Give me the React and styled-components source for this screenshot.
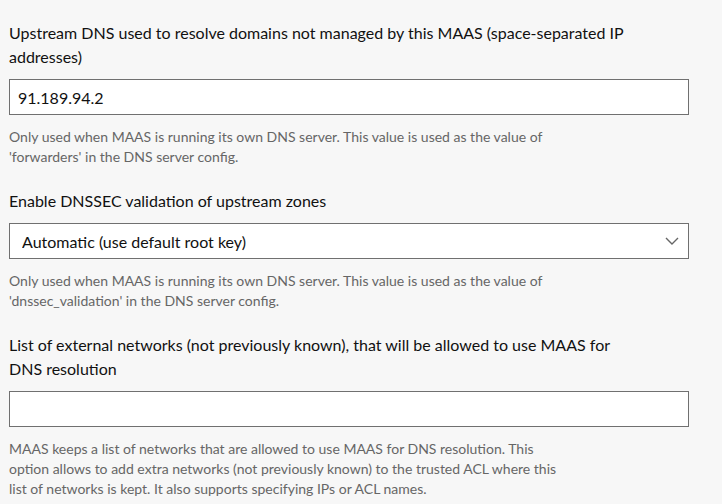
import React from "react";
import styled, { createGlobalStyle } from "styled-components";

const GlobalStyle = createGlobalStyle`
  html, body {
    margin: 0;
    background: #f7f7f7;
  }
  body {
    font-family: Lato, "Liberation Sans", sans-serif;
    color: #111;
  }
`;

const Form = styled.form`
  padding: 21px 0 0 9px;
  width: 680px;
`;

const Field = styled.div`
  display: flex;
  flex-direction: column;
  margin-bottom: 22px;
`;

const Label = styled.label`
  font-size: 16px;
  line-height: 24px;
  max-width: 630px;
  margin-bottom: 10px;
  color: #111;
`;

const TextInput = styled.input`
  box-sizing: border-box;
  width: 100%;
  height: 36px;
  margin: 0;
  padding: 0 8px;
  border: 1px solid #707070;
  border-radius: 0;
  background: #fff;
  font-family: inherit;
  font-size: 16px;
  color: #111;
  outline: none;
`;

const SelectWrap = styled.div`
  position: relative;
  width: 100%;
`;

const Select = styled.select`
  box-sizing: border-box;
  appearance: none;
  width: 100%;
  height: 36px;
  margin: 0;
  padding: 0 40px 0 12px;
  border: 1px solid #707070;
  border-radius: 0;
  background: #fff;
  font-family: inherit;
  font-size: 16px;
  color: #111;
  outline: none;
`;

const Chevron = styled.svg`
  position: absolute;
  right: 10px;
  top: 14px;
  pointer-events: none;
`;

const Help = styled.p`
  margin: 12px 0 0;
  max-width: 560px;
  font-size: 14px;
  line-height: 20px;
  color: #666;
`;

const fields = [
  {
    id: "upstream",
    label:
      "Upstream DNS used to resolve domains not managed by this MAAS (space-separated IP addresses)",
    value: "91.189.94.2",
    help: "Only used when MAAS is running its own DNS server. This value is used as the value of 'forwarders' in the DNS server config.",
  },
  {
    id: "dnssec",
    label: "Enable DNSSEC validation of upstream zones",
    select: ["Automatic (use default root key)", "Yes (manually configured root key)", "No (disable DNSSEC)"],
    help: "Only used when MAAS is running its own DNS server. This value is used as the value of 'dnssec_validation' in the DNS server config.",
  },
  {
    id: "trusted",
    label:
      "List of external networks (not previously known), that will be allowed to use MAAS for DNS resolution",
    value: "",
    help: "MAAS keeps a list of networks that are allowed to use MAAS for DNS resolution. This option allows to add extra networks (not previously known) to the trusted ACL where this list of networks is kept. It also supports specifying IPs or ACL names.",
  },
];

function App() {
  return (
    <>
      <GlobalStyle />
      <Form onSubmit={(e) => e.preventDefault()}>
        {fields.map((f) => (
          <Field key={f.id}>
            <Label htmlFor={f.id}>{f.label}</Label>
            {f.select ? (
              <SelectWrap>
                <Select id={f.id} defaultValue={f.select[0]}>
                  {f.select.map((o) => (
                    <option key={o}>{o}</option>
                  ))}
                </Select>
                <Chevron width="14" height="8" viewBox="0 0 14 8">
                  <path d="M1 1l6 6 6-6" fill="none" stroke="#666" strokeWidth="1.4" />
                </Chevron>
              </SelectWrap>
            ) : (
              <TextInput id={f.id} type="text" defaultValue={f.value} />
            )}
            <Help>{f.help}</Help>
          </Field>
        ))}
      </Form>
    </>
  );
}

export default App;
